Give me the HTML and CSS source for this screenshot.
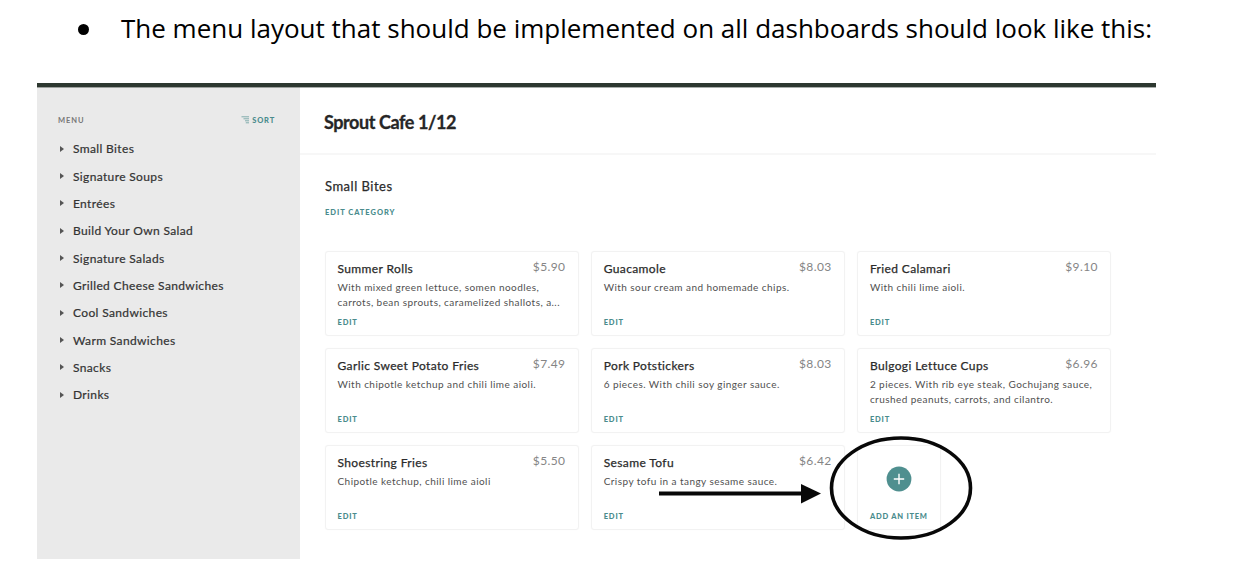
FILE: index.html
```html
<!DOCTYPE html>
<html lang="en">
<head>
<meta charset="utf-8">
<title>Menu layout</title>
<link rel="stylesheet" href="styles.css">
</head>
<body>
<div class="doc">
  <div class="bullet-line"><span class="dot"></span><span class="sentence">The menu layout that should be implemented on all dashboards should look like this:</span></div>
  <div class="shot">
    <aside class="sidebar">
      <div class="side-head">
        <span class="label">MENU</span>
        <span class="sort"><svg width="9" height="8" viewBox="0 0 9 8"><path d="M0.5 0.8H8M2.5 2.8H8M4 4.8H8M4.8 6.8H8" stroke="currentColor" stroke-width="0.65" fill="none"/></svg><span>SORT</span></span>
      </div>
      <ul class="cats">
        <li><span>Small Bites</span></li>
        <li><span>Signature Soups</span></li>
        <li><span>Entrées</span></li>
        <li><span>Build Your Own Salad</span></li>
        <li><span>Signature Salads</span></li>
        <li><span>Grilled Cheese Sandwiches</span></li>
        <li><span>Cool Sandwiches</span></li>
        <li><span>Warm Sandwiches</span></li>
        <li><span>Snacks</span></li>
        <li><span>Drinks</span></li>
      </ul>
    </aside>
    <main class="main">
      <header class="top"><h1>Sprout Cafe 1/12</h1></header>
      <section class="body">
        <h2>Small Bites</h2>
        <span class="action edit-cat">EDIT CATEGORY</span>
        <div class="grid">
          <article class="card"><div class="row"><h3>Summer Rolls</h3><span class="price">$5.90</span></div><p>With mixed green lettuce, somen noodles,<br>carrots, bean sprouts, caramelized shallots, a...</p><span class="action">EDIT</span></article>
          <article class="card"><div class="row"><h3>Guacamole</h3><span class="price">$8.03</span></div><p>With sour cream and homemade chips.</p><span class="action">EDIT</span></article>
          <article class="card"><div class="row"><h3>Fried Calamari</h3><span class="price">$9.10</span></div><p>With chili lime aioli.</p><span class="action">EDIT</span></article>
          <article class="card"><div class="row"><h3>Garlic Sweet Potato Fries</h3><span class="price">$7.49</span></div><p>With chipotle ketchup and chili lime aioli.</p><span class="action">EDIT</span></article>
          <article class="card"><div class="row"><h3>Pork Potstickers</h3><span class="price">$8.03</span></div><p>6 pieces. With chili soy ginger sauce.</p><span class="action">EDIT</span></article>
          <article class="card"><div class="row"><h3>Bulgogi Lettuce Cups</h3><span class="price">$6.96</span></div><p>2 pieces. With rib eye steak, Gochujang sauce,<br>crushed peanuts, carrots, and cilantro.</p><span class="action">EDIT</span></article>
          <article class="card"><div class="row"><h3>Shoestring Fries</h3><span class="price">$5.50</span></div><p>Chipotle ketchup, chili lime aioli</p><span class="action">EDIT</span></article>
          <article class="card"><div class="row"><h3>Sesame Tofu</h3><span class="price">$6.42</span></div><p>Crispy tofu in a tangy sesame sauce.</p><span class="action">EDIT</span></article>
          <article class="card add">
            <svg width="26" height="26" viewBox="0 0 26 26"><circle cx="13" cy="13" r="12.4" fill="#4f8f8f"/><path d="M13 7.8V18.2M7.8 13H18.2" stroke="#fff" stroke-width="1.4"/></svg>
            <span class="action">ADD AN ITEM</span>
          </article>
        </div>
      </section>
    </main>
    <svg class="marks" width="330" height="120" viewBox="650 430 330 120">
      <ellipse cx="901" cy="488" rx="69.5" ry="50" fill="none" stroke="#080808" stroke-width="3.6"/>
      <path d="M659 493.5H803" stroke="#080808" stroke-width="4"/>
      <path d="M801 484L821 493.5L801 503.500Z" fill="#080808"/>
    </svg>
  </div>
</div>
</body>
</html>
```
FILE: styles.css
```css
* { box-sizing: border-box; }
body { margin: 0; background: #fff; font-family: Lato, "Open Sans", sans-serif; }
h1, h2, h3, p, ul { margin: 0; padding: 0; }
.doc { width: 1244px; height: 569px; overflow: hidden; }
.bullet-line { height: 83px; display: flex; align-items: flex-start; padding: 8px 0 0 78px; color: #000; }
.dot { width: 11px; height: 11px; border-radius: 50%; background: #000; margin: 16px 32px 0 0; }
.sentence { font: 400 26px/40px "Open Sans", sans-serif; white-space: nowrap; }
.shot { position: relative; display: flex; width: 1119px; height: 476px; margin-left: 37px; border-top: 4px solid #2d3830; }
.sidebar { width: 263px; background: #eaeaea; border-top: 1px solid #9da19e; padding: 25px 25px 0 21px; }
.side-head { display: flex; justify-content: space-between; align-items: center; height: 14px; }
.label, .sort { font-size: 7.5px; font-weight: 700; letter-spacing: 0.9px; color: #777; }
.sort { display: flex; align-items: center; gap: 2px; color: #4a8c8d; font-weight: 900; letter-spacing: 0.8px; }
.cats { list-style: none; padding-top: 8px; }
.cats li { display: flex; align-items: center; height: 27.35px; font-size: 12px; color: #333; -webkit-text-stroke: 0.2px #333; letter-spacing: 0.36px; }
.cats li::before { content: ""; border-left: 4px solid #555; border-top: 3px solid transparent; border-bottom: 3px solid transparent; margin: 0 9px 0 2px; }
.main { flex: 1; }
.top { height: 68px; border-bottom: 2px solid #f7f7f7; border-top: 1px solid #a9aeab; padding: 20px 0 0 24px; }
h1 { font-size: 18px; line-height: 28px; font-weight: 700; color: #262626; letter-spacing: -0.42px; -webkit-text-stroke: 0.3px #262626; white-space: nowrap; }
.body { padding: 21px 0 0 24px; }
h2 { font-size: 13px; line-height: 20px; font-weight: 400; color: #2b2b2b; -webkit-text-stroke: 0.25px #2b2b2b; letter-spacing: 0.5px; padding-left: 1px; }
.action { display: block; font-size: 7.5px; line-height: 10px; font-weight: 900; color: #4a8c8d; letter-spacing: 0.85px; white-space: nowrap; }
.edit-cat { margin: 12px 0 0 1px; letter-spacing: 0.97px; }
.grid { display: grid; grid-template-columns: repeat(3, 254px); grid-auto-rows: 85px; gap: 12.2px; margin: 33px 0 0 0.5px; }
.card { border: 1px solid #f2f2f2; border-radius: 3px; box-shadow: 0 0 1px #f0f0f0; padding: 8px 12px 0; display: flex; flex-direction: column; height: 85px; }
.row { display: flex; justify-content: space-between; height: 20px; }
h3 { font-size: 12px; line-height: 18px; font-weight: 400; color: #2b2b2b; -webkit-text-stroke: 0.25px #2b2b2b; letter-spacing: 0.38px; white-space: nowrap; }
.price { font-size: 12px; line-height: 14px; color: #858585; letter-spacing: 0.4px; }
.card p { font-size: 10px; line-height: 15px; height: 31px; color: #505050; letter-spacing: 0.44px; white-space: nowrap; }
.card .action { margin-top: 7px; }
.add { width: 84px; align-items: center; padding: 20px 0 0; }
.add .action { margin-top: 20px; letter-spacing: 0.75px; }
.marks { position: absolute; left: 613px; top: 343px; }
```
